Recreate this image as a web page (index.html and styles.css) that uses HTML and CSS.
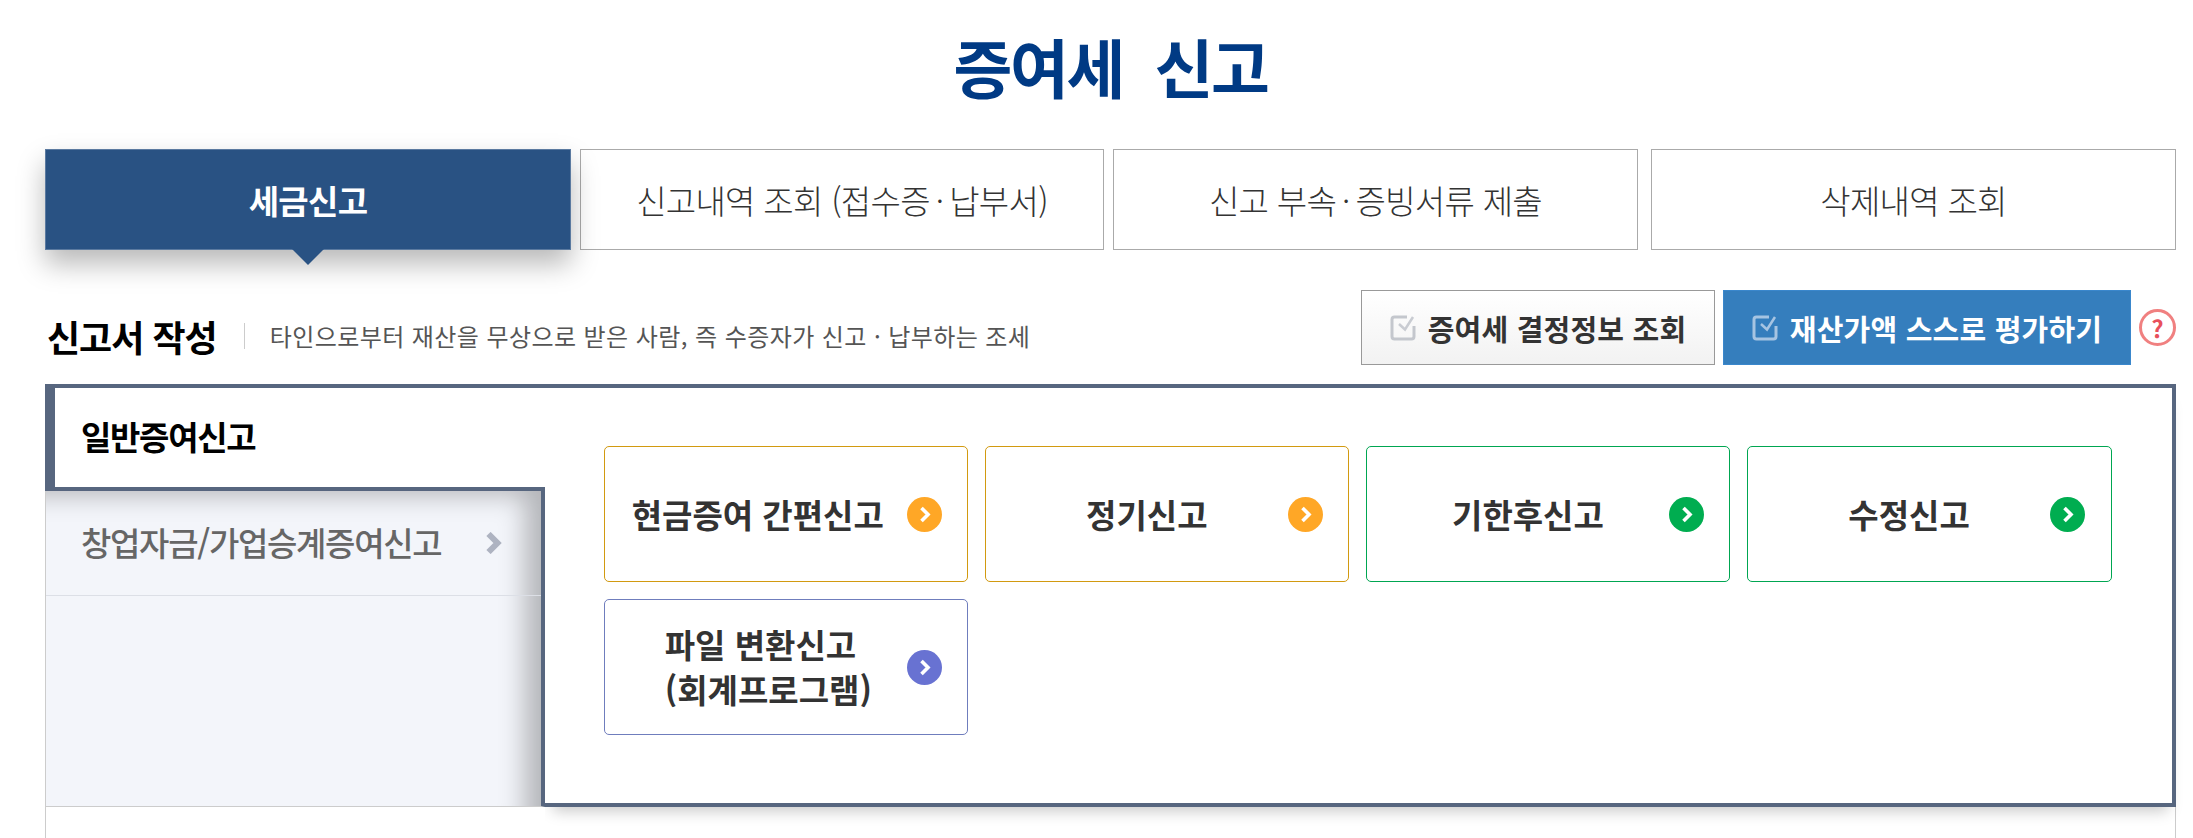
FILE: index.html
```html
<!DOCTYPE html>
<html lang="ko">
<head>
<meta charset="utf-8">
<title>증여세 신고</title>
<link rel="stylesheet" href="styles.css">
</head>
<body>
<main class="page">
  <h1 class="title">증여세&nbsp; 신고</h1>
  <nav class="tabs">
    <a class="tab tab-on">세금신고</a>
    <a class="tab tab-narrow">신고내역 조회 (접수증&#8201;·&#8201;납부서)</a>
    <a class="tab">신고 부속&#8201;·&#8201;증빙서류 제출</a>
    <a class="tab tab-last">삭제내역 조회</a>
  </nav>
  <section class="head">
    <h2 class="head-title">신고서 작성</h2>
    <p class="head-desc">타인으로부터 재산을 무상으로 받은 사람, 즉 수증자가 신고 · 납부하는 조세</p>
    <a class="btn btn-light">
      <svg class="check" viewBox="0 0 26 26"><path class="check-box" d="M17 2H4.5A2.5 2.5 0 0 0 2 4.5v17A2.5 2.5 0 0 0 4.5 24h17a2.5 2.5 0 0 0 2.5-2.5V11"/><path class="check-mark" d="M9 9l6 5.5L23 2"/></svg>
      증여세 결정정보 조회
    </a>
    <a class="btn btn-blue">
      <svg class="check" viewBox="0 0 26 26"><path class="check-box" d="M17 2H4.5A2.5 2.5 0 0 0 2 4.5v17A2.5 2.5 0 0 0 4.5 24h17a2.5 2.5 0 0 0 2.5-2.5V11"/><path class="check-mark" d="M9 9l6 5.5L23 2"/></svg>
      재산가액 스스로 평가하기
    </a>
    <a class="help">?</a>
  </section>
  <section class="panel">
    <aside class="side">
      <div class="side-on">일반증여신고</div>
      <div class="side-list">
        <div class="side-item">창업자금/가업승계증여신고
          <svg class="side-arrow" viewBox="0 0 16 22"><path d="M3 2l9 9-9 9"/></svg>
        </div>
      </div>
    </aside>
    <div class="cards">
      <a class="card card-orange"><span class="card-text card-text-wide">현금증여 간편신고</span><svg class="go" viewBox="0 0 35 35"><circle cx="17.5" cy="17.5" r="17.5"/><path d="M14.5 11l6.5 6.5-6.5 6.5"/></svg></a>
      <a class="card card-orange"><span class="card-text">정기신고</span><svg class="go" viewBox="0 0 35 35"><circle cx="17.5" cy="17.5" r="17.5"/><path d="M14.5 11l6.5 6.5-6.5 6.5"/></svg></a>
      <a class="card card-green"><span class="card-text">기한후신고</span><svg class="go" viewBox="0 0 35 35"><circle cx="17.5" cy="17.5" r="17.5"/><path d="M14.5 11l6.5 6.5-6.5 6.5"/></svg></a>
      <a class="card card-green"><span class="card-text">수정신고</span><svg class="go" viewBox="0 0 35 35"><circle cx="17.5" cy="17.5" r="17.5"/><path d="M14.5 11l6.5 6.5-6.5 6.5"/></svg></a>
      <a class="card card-purple"><span class="card-text card-text-left">파일 변환신고<br>(회계프로그램)</span><svg class="go" viewBox="0 0 35 35"><circle cx="17.5" cy="17.5" r="17.5"/><path d="M14.5 11l6.5 6.5-6.5 6.5"/></svg></a>
    </div>
  </section>
  <div class="below"></div>
</main>
</body>
</html>
```
FILE: styles.css
```css
* { box-sizing: border-box; }
html, body { margin: 0; height: 838px; overflow: hidden; background: #fff; }
body { font-family: "Noto Sans CJK KR", "Noto Sans", sans-serif; color: #333; }
.page { padding: 0 17px 0 45px; }

.title { margin: 0; height: 149px; padding-top: 22px; text-align: center; font-size: 64px; line-height: 86px; font-weight: 700; color: #003a84; letter-spacing: -2.3px; }

.tabs { display: flex; gap: 9px; height: 101px; }
.tab { flex: 1; display: flex; align-items: center; justify-content: center; border: 1px solid #aaa; background: #fff; font-size: 33px; font-weight: 300; color: #333; letter-spacing: -0.7px; }
.tab-narrow { flex: none; width: 524px; }
.tab-last { margin-left: 4px; }
.tab-on { position: relative; flex: none; width: 526px; border-color: #5b7aa0; background: #295283; color: #fff; font-weight: 700; box-shadow: 0 14px 26px rgba(0,0,0,.28); }
.tab-on::after { content: ""; position: absolute; left: 50%; top: 100%; margin-left: -16px; border: solid transparent; border-width: 16px 16px 0; border-top-color: #295283; }

.head { display: flex; align-items: center; height: 134px; padding-bottom: 19px; padding-top: 40px; }
.head-title { margin: 16px 0 0 2px; font-size: 36px; line-height: 48px; font-weight: 700; color: #000; letter-spacing: -1px; white-space: nowrap; }
.head-desc { flex: 1; margin: 16px 0 0 27px; padding-left: 26px; position: relative; font-size: 24px; line-height: 34px; color: #555; letter-spacing: .42px; white-space: nowrap; }
.head-desc::before { content: ""; position: absolute; left: 0; top: 4px; bottom: 4px; width: 1px; background: #ccc; }
.btn { display: flex; align-items: center; justify-content: center; gap: 12px; height: 75px; font-size: 29px; font-weight: 700; letter-spacing: .2px; white-space: nowrap; }
.btn-light { width: 354px; margin-right: 8px; border: 1px solid #999; background: linear-gradient(#fff, #f2f2f2); color: #333; }
.btn-blue { width: 408px; border: 1px solid #3a87cc; background: #357ebd; color: #fff; }
.check { width: 26px; height: 26px; flex: none; }
.check-box, .check-mark { fill: none; stroke-width: 3; }
.btn-light .check-box { stroke: #c4c7cd; }
.btn-light .check-mark { stroke: #c9ccd2; stroke-width: 2.5; }
.btn-blue .check-box { stroke: #a6c4e2; }
.btn-blue .check-mark { stroke: #a6c4e2; stroke-width: 2.5; }
.help { width: 37px; height: 37px; margin-left: 8px; border: 3px solid #f08080; border-radius: 50%; display: flex; align-items: center; justify-content: center; font-size: 24px; font-weight: 700; color: #e8505b; line-height: 1; }

.panel { display: flex; height: 423px; }
.side { width: 500px; flex: none; display: flex; flex-direction: column; }
.side-on { height: 107px; padding: 25px 0 0 26px; border: solid #57667f; border-width: 4px 0 4px 10px; background: #fff; font-size: 33px; line-height: 46px; font-weight: 700; color: #000; letter-spacing: -1.3px; }
.side-list { flex: 1; background: #f3f5fa; border: solid #ccc; border-width: 0 4px 1px 1px; border-right-color: #57667f; box-shadow: inset -28px 16px 26px -12px rgba(0,0,0,.26); }
.side-item { position: relative; height: 105px; padding: 28px 0 0 35px; border-bottom: 1px solid #dcdfe6; font-size: 33px; line-height: 46px; font-weight: 500; color: #666; letter-spacing: -1.3px; white-space: nowrap; }
.side-arrow { position: absolute; left: 439px; top: 41px; width: 17px; height: 22px; fill: none; stroke: #aeb3c1; stroke-width: 6; }

.cards { flex: 1; position: relative; display: flex; flex-wrap: wrap; align-content: flex-start; gap: 17px 16.6px; padding: 58px 0 0 58.75px; border: solid #57667f; border-width: 4px 4px 4px 0; background: #fff; box-shadow: 0 12px 14px -8px rgba(0,0,0,.22); clip-path: inset(0 -30px -30px 0); }
.card { width: 364.5px; height: 136px; display: flex; align-items: center; padding: 0 25.5px 0 0; border: 1px solid; border-radius: 5px; background: #fff; }
.card-orange { border-color: #d29a10; }
.card-green { border-color: #00a651; }
.card-purple { border-color: #6f7dbd; }
.card-text { flex: 1; padding-left: 20px; text-align: center; font-size: 33px; line-height: 45px; font-weight: 700; color: #333; white-space: nowrap; }
.card-text-wide { padding-left: 4px; }
.card-text-left { padding-left: 60px; text-align: left; }
.go { width: 35px; height: 35px; flex: none; }
.go path { fill: none; stroke: #fff; stroke-width: 3.6; }
.card-orange .go circle { fill: #ffa726; }
.card-green .go circle { fill: #00ad50; }
.card-purple .go circle { fill: #6872d2; }

.below { height: 32px; border: solid #ccc; border-width: 0 1px; }
```
